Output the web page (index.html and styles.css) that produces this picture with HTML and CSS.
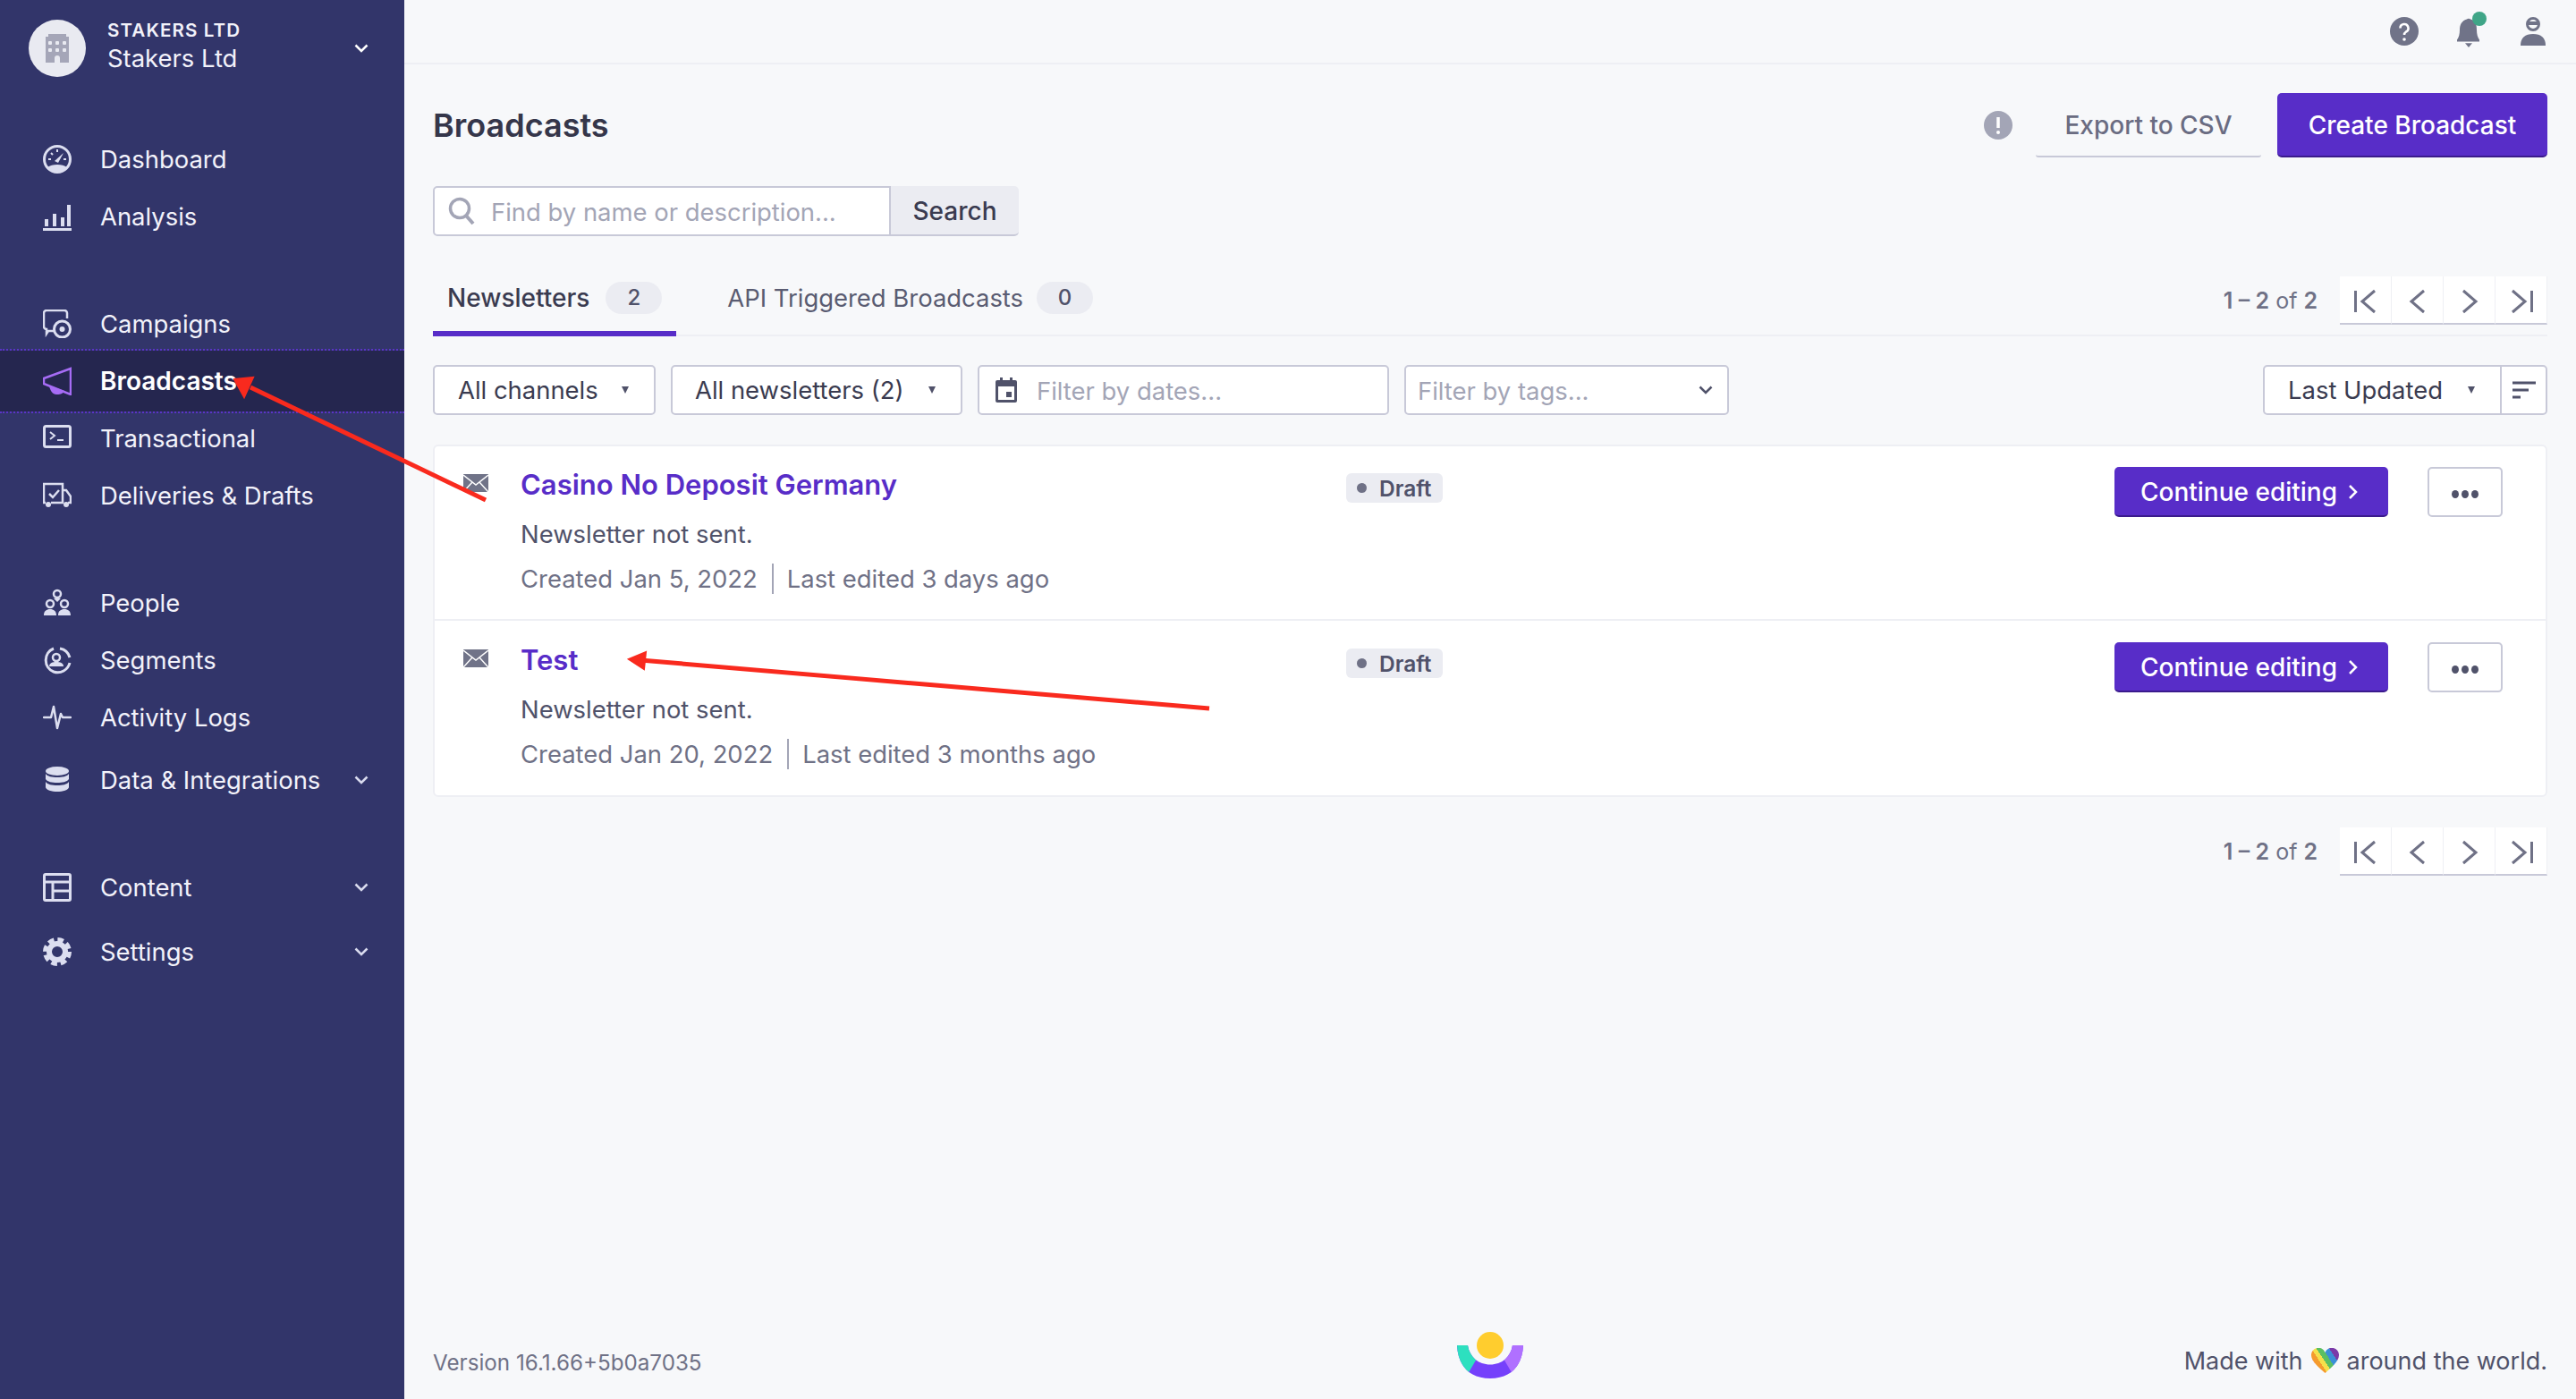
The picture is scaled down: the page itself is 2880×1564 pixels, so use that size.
FILE: index.html
```html
<!DOCTYPE html>
<html lang="en">
<head>
    <meta charset="UTF-8">
    <meta name="viewport" content="width=device-width, initial-scale=1.0">
    <title>Broadcasts</title>
    <link rel="stylesheet" href="styles.css">
</head>
<body>

<div class="app">
    <aside class="sidebar">
        <div class="org">
            <div class="org-avatar">
                <svg width="26" height="32" viewBox="0 0 26 32"><path d="M3 0h20v3h3v29H16v-5a3 3 0 0 0-6 0v5H0V3h3z" fill="#a5a6b8"/><g fill="#e9eaf1"><rect x="3" y="8" width="4" height="4" rx="1"/><rect x="11" y="8" width="4" height="4" rx="1"/><rect x="19" y="8" width="4" height="4" rx="1"/><rect x="3" y="16" width="4" height="4" rx="1"/><rect x="11" y="16" width="4" height="4" rx="1"/><rect x="19" y="16" width="4" height="4" rx="1"/></g></svg>
            </div>
            <div class="org-names">
                <div class="org-caps">STAKERS LTD</div>
                <div class="org-name">Stakers Ltd</div>
            </div>
            <svg class="chev org-chev" viewBox="0 0 16 10"><path d="M1.500 1.500 8 8l6.500-6.500"/></svg>
        </div>

        <nav class="nav">
            <div class="nav-group">
                <a class="nav-item">
                    <svg class="nav-icon" viewBox="0 0 32 32"><circle cx="16" cy="16" r="14.500" fill="none" stroke="currentColor" stroke-width="3"/><path d="M5 25a14 8 0 0 1 22 0 14 14 0 0 1-22 0z" fill="currentColor"/><path d="m13 18 10-9-6 11z" fill="currentColor"/><path d="M6 16h3M16 5v3M9 9l2 2M23 16h3" stroke="currentColor" stroke-width="2"/></svg>
                    Dashboard
                </a>
                <a class="nav-item">
                    <svg class="nav-icon" viewBox="0 0 32 32"><path d="M2 19h4v8H2zM11 13h4v14h-4zM20 17h4v10h-4zM27 3h4v24h-4z" fill="currentColor"/><path d="M0 30.500h32" stroke="currentColor" stroke-width="3"/></svg>
                    Analysis
                </a>
            </div>

            <div class="nav-group">
                <a class="nav-item">
                    <svg class="nav-icon" viewBox="0 0 32 32"><path d="M15 24H6l-2 3v-5a3 3 0 0 1-3-3V4a3 3 0 0 1 3-3h20a3 3 0 0 1 3 3v6" fill="none" stroke="currentColor" stroke-width="2.500"/><circle cx="21.500" cy="22" r="9" fill="#32356a" stroke="currentColor" stroke-width="3"/><circle cx="21.500" cy="22" r="3" fill="currentColor"/></svg>
                    Campaigns
                </a>
                <a class="nav-item nav-active">
                    <svg class="nav-icon" viewBox="0 0 32 32"><path d="M1 13 31 2v29L1 19z" fill="none" stroke="currentColor" stroke-width="2.500"/><path d="m7 21 17 6c-2 4-6 4-9 4-4 0-7-4-8-10z" fill="currentColor"/></svg>
                    Broadcasts
                </a>
                <a class="nav-item">
                    <svg class="nav-icon" viewBox="0 0 32 32"><rect x="1.500" y="2.500" width="29" height="23" rx="2" fill="none" stroke="currentColor" stroke-width="3"/><path d="m8 9 5 4-5 4" fill="none" stroke="currentColor" stroke-width="2"/><path d="M16 18h7" stroke="currentColor" stroke-width="2"/></svg>
                    Transactional
                </a>
                <a class="nav-item">
                    <svg class="nav-icon" viewBox="0 0 32 32"><path d="M3 24H1V3h21v21H9M22 10h4l5 7v7h-3M22 24h1" fill="none" stroke="currentColor" stroke-width="2.500"/><path d="m7 14 4 4 7-8" fill="none" stroke="currentColor" stroke-width="2.500"/><circle cx="6" cy="26" r="3" fill="currentColor"/><circle cx="26" cy="26" r="3" fill="currentColor"/></svg>
                    Deliveries &amp; Drafts
                </a>
            </div>

            <div class="nav-group">
                <a class="nav-item">
                    <svg class="nav-icon" viewBox="0 0 32 32"><g fill="none" stroke="currentColor" stroke-width="2.500"><circle cx="16" cy="6" r="4"/><circle cx="8" cy="17" r="4"/><circle cx="24" cy="17" r="4"/></g><path d="M12 11h8l-4 4zM1 30c0-5 3-7 7-7s7 2 7 7zM17 30c0-5 3-7 7-7s7 2 7 7z" fill="currentColor"/></svg>
                    People
                </a>
                <a class="nav-item">
                    <svg class="nav-icon" viewBox="0 0 32 32"><path d="M12 3a14 14 0 0 0 0 26 14 14 0 0 0 18-10M30 13a14 14 0 0 0-11-10" fill="none" stroke="currentColor" stroke-width="3"/><circle cx="15" cy="13" r="4" fill="none" stroke="currentColor" stroke-width="2.500"/><path d="M7 23c0-4 4-5 8-5s8 1 8 5z" fill="currentColor"/></svg>
                    Segments
                </a>
                <a class="nav-item">
                    <svg class="nav-icon" viewBox="0 0 32 32"><path d="M1 16h8l3-12 4 24 4-16 2 4h9" fill="none" stroke="currentColor" stroke-width="2.500" stroke-linecap="round" stroke-linejoin="round"/></svg>
                    Activity Logs
                </a>
                <a class="nav-item nav-tall nav-data">
                    <svg class="nav-icon" viewBox="0 0 32 32"><ellipse cx="16" cy="6" rx="13" ry="5" fill="currentColor"/><path d="M3 9c2 3 7 4 13 4s11-1 13-4v6c-2 3-7 4-13 4S5 18 3 15zM3 18c2 3 7 4 13 4s11-1 13-4v6c0 3-7 5-13 5S3 27 3 24z" fill="currentColor"/></svg>
                    Data &amp; Integrations
                    <svg class="chev" viewBox="0 0 16 10"><path d="M1.500 1.500 8 8l6.500-6.500"/></svg>
                </a>
            </div>

            <div class="nav-group nav-group-last">
                <a class="nav-item nav-tall">
                    <svg class="nav-icon" viewBox="0 0 32 32"><rect x="1.500" y="1.500" width="29" height="29" rx="1.500" fill="none" stroke="currentColor" stroke-width="3"/><path d="M1 10h30M11 10v20M11 20h20" stroke="currentColor" stroke-width="3"/></svg>
                    Content
                    <svg class="chev" viewBox="0 0 16 10"><path d="M1.500 1.500 8 8l6.500-6.500"/></svg>
                </a>
                <a class="nav-item nav-tall">
                    <svg class="nav-icon" viewBox="0 0 32 32"><circle cx="16" cy="16" r="9" fill="none" stroke="currentColor" stroke-width="6"/><circle cx="16" cy="16" r="13.500" fill="none" stroke="currentColor" stroke-width="5" stroke-dasharray="6.600 3.999"/></svg>
                    Settings
                    <svg class="chev" viewBox="0 0 16 10"><path d="M1.500 1.500 8 8l6.500-6.500"/></svg>
                </a>
            </div>
        </nav>
    </aside>

    <div class="main">
        <header class="topbar">
            <svg width="32" height="32" viewBox="0 0 32 32"><circle cx="16" cy="16" r="16" fill="#707388"/><path d="M11.500 12.500a4.500 4.500 0 1 1 6.500 4c-1.500 1-2 1.500-2 3.500" fill="none" stroke="#fff" stroke-width="2.600"/><circle cx="16" cy="25" r="1.800" fill="#fff"/></svg>
            <svg class="top-bell" width="36" height="44" viewBox="0 0 36 44"><g transform="translate(0 4) scale(1 .92)"><path d="M13 5a2.500 2.500 0 0 1 4 0c6 2 7 7 7 13 0 5 1 9 3 12v2H2v-2c2-3 3-7 3-12 0-6 2-11 8-13z" fill="#707388"/><path d="M11 34h8l-4 5z" fill="#707388"/></g><circle cx="27" cy="8" r="8" fill="#3fa587"/></svg>
            <svg width="28" height="32" viewBox="0 0 28 32"><circle cx="14" cy="8" r="6.500" fill="none" stroke="#707388" stroke-width="3"/><path d="M8 5h12l-1 4H9z" fill="#707388"/><path d="M0 32c0-9 5-13 14-13s14 4 14 13z" fill="#707388"/></svg>
        </header>

        <div class="content">
            <div class="page-head">
                <h1 class="page-title">Broadcasts</h1>
                <svg class="info-icon" width="32" height="32" viewBox="0 0 32 32"><circle cx="16" cy="16" r="16" fill="#a3a5b6"/><path d="M16 7v12" stroke="#fff" stroke-width="3.500"/><circle cx="16" cy="24" r="2" fill="#fff"/></svg>
                <button class="btn-export">Export to CSV</button>
                <button class="btn-primary btn-create">Create Broadcast</button>
            </div>

            <div class="search">
                <div class="search-input">
                    <svg width="32" height="32" viewBox="0 0 32 32"><circle cx="14" cy="13" r="10.500" fill="none" stroke="#a3a5b6" stroke-width="3.500"/><path d="m21 21 8 9" stroke="#a3a5b6" stroke-width="4"/></svg>
                    <span class="placeholder">Find by name or description...</span>
                </div>
                <div class="search-btn">Search</div>
            </div>

            <div class="tabs">
                <div class="tab tab-active">Newsletters <span class="count">2</span></div>
                <div class="tab">API Triggered Broadcasts <span class="count">0</span></div>
                <div class="tabs-pager pager">
                    <span class="pager-label"><b>1 – 2</b> of <b>2</b></span>
                    <div class="pager-btns">
                        <a class="pager-btn"><svg viewBox="0 0 28 30"><path d="M2.500 3v24M24 3 10 15l14 12"/></svg></a>
                        <a class="pager-btn"><svg viewBox="0 0 28 30"><path d="M21 3 7 15l14 12"/></svg></a>
                        <a class="pager-btn"><svg viewBox="0 0 28 30"><path d="m7 3 14 12L7 27"/></svg></a>
                        <a class="pager-btn"><svg viewBox="0 0 28 30"><path d="M25.500 3v24M4 3l14 12L4 27"/></svg></a>
                    </div>
                </div>
            </div>

            <div class="filters">
                <div class="select select-channels">All channels <i class="caret"></i></div>
                <div class="select select-newsletters">All newsletters (2) <i class="caret"></i></div>
                <div class="select select-dates">
                    <svg width="24" height="28" viewBox="0 0 24 28"><path d="M2 3h3V0h3v3h8V0h3v3h3a2 2 0 0 1 2 2v21a2 2 0 0 1-2 2H2a2 2 0 0 1-2-2V5a2 2 0 0 1 2-2z" fill="#50526a"/><path d="M3 10h18v15H3z" fill="#fff"/><path d="M12 16h6v6h-6z" fill="#50526a"/></svg>
                    <span class="placeholder">Filter by dates...</span>
                </div>
                <div class="select select-tags">
                    <span class="placeholder">Filter by tags...</span>
                    <svg class="chev chev-dark" viewBox="0 0 16 10"><path d="M1.500 1.500 8 8l6.500-6.500"/></svg>
                </div>
                <div class="sort">
                    <div class="sort-select">Last Updated <i class="caret"></i></div>
                    <div class="sort-dir">
                        <svg width="26" height="22" viewBox="0 0 26 22"><path d="M0 3h26M0 11h18M0 19h9" stroke="#50526a" stroke-width="3"/></svg>
                    </div>
                </div>
            </div>

            <div class="list">
                <div class="row">
                    <svg class="row-icon" width="28" height="20" viewBox="0 0 28 20"><path d="M0 0h28v20H0z" fill="#707388"/><path d="M0 1l14 11L28 1M0 20l10-11M28 20 18 9" fill="none" stroke="#fff" stroke-width="1.500"/></svg>
                    <div class="row-body">
                        <a class="row-title">Casino No Deposit Germany</a>
                        <div class="row-status">Newsletter not sent.</div>
                        <div class="row-meta"><span class="row-created">Created Jan 5, 2022</span><span>Last edited 3 days ago</span></div>
                    </div>
                    <div class="badge-col"><span class="badge"><i class="badge-dot"></i>Draft</span></div>
                    <button class="btn-primary btn-continue">Continue editing <svg width="12" height="18" viewBox="0 0 12 18"><path d="m2 2 7 7-7 7" fill="none" stroke="#fff" stroke-width="2.500"/></svg></button>
                    <button class="btn-more"><i></i><i></i><i></i></button>
                </div>
                <div class="row">
                    <svg class="row-icon" width="28" height="20" viewBox="0 0 28 20"><path d="M0 0h28v20H0z" fill="#707388"/><path d="M0 1l14 11L28 1M0 20l10-11M28 20 18 9" fill="none" stroke="#fff" stroke-width="1.500"/></svg>
                    <div class="row-body">
                        <a class="row-title">Test</a>
                        <div class="row-status">Newsletter not sent.</div>
                        <div class="row-meta"><span class="row-created">Created Jan 20, 2022</span><span>Last edited 3 months ago</span></div>
                    </div>
                    <div class="badge-col"><span class="badge"><i class="badge-dot"></i>Draft</span></div>
                    <button class="btn-primary btn-continue">Continue editing <svg width="12" height="18" viewBox="0 0 12 18"><path d="m2 2 7 7-7 7" fill="none" stroke="#fff" stroke-width="2.500"/></svg></button>
                    <button class="btn-more"><i></i><i></i><i></i></button>
                </div>
            </div>

            <div class="bottom-pager pager">
                <span class="pager-label"><b>1 – 2</b> of <b>2</b></span>
                <div class="pager-btns">
                    <a class="pager-btn"><svg viewBox="0 0 28 30"><path d="M2.500 3v24M24 3 10 15l14 12"/></svg></a>
                    <a class="pager-btn"><svg viewBox="0 0 28 30"><path d="M21 3 7 15l14 12"/></svg></a>
                    <a class="pager-btn"><svg viewBox="0 0 28 30"><path d="m7 3 14 12L7 27"/></svg></a>
                    <a class="pager-btn"><svg viewBox="0 0 28 30"><path d="M25.500 3v24M4 3l14 12L4 27"/></svg></a>
                </div>
            </div>

            <footer class="footer">
                <span class="version">Version 16.1.66+5b0a7035</span>
                <svg class="logo" width="74" height="52" viewBox="0 0 74 52">
                    <defs>
                        <clipPath id="smile"><path d="M0 15C1 38 14 52 37 52S73 38 74 15H62C60 28 50 36.500 37 36.500S14 28 12 15z"/></clipPath>
                    </defs>
                    <circle cx="37" cy="15" r="15" fill="#ffcd2e"/>
                    <g clip-path="url(#smile)">
                        <rect width="74" height="52" fill="#7540fb"/>
                        <path d="M0 0h22v30L12 47H0z" fill="#2de0bf"/>
                        <path d="M74 0H52v30l10 17h12z" fill="#b070ff"/>
                    </g>
                </svg>
                <span class="made">Made with
                    <svg class="heart" width="31" height="28" viewBox="0 0 31 28">
                        <defs>
                            <linearGradient id="rainbow" x1="0" y1="0.800" x2="1" y2="0.200" gradientUnits="objectBoundingBox">
                                <stop offset="0" stop-color="#e23c3c"/><stop offset=".18" stop-color="#e23c3c"/>
                                <stop offset=".18" stop-color="#f59b2e"/><stop offset=".34" stop-color="#f59b2e"/>
                                <stop offset=".34" stop-color="#f6e04a"/><stop offset=".48" stop-color="#f6e04a"/>
                                <stop offset=".48" stop-color="#5bbf62"/><stop offset=".64" stop-color="#5bbf62"/>
                                <stop offset=".64" stop-color="#3b8fd6"/><stop offset=".82" stop-color="#3b8fd6"/>
                                <stop offset=".82" stop-color="#7a3aa8"/><stop offset="1" stop-color="#7a3aa8"/>
                            </linearGradient>
                        </defs>
                        <path d="M15.500 28C8 21 0 15 0 8a8 8 0 0 1 15.500-3A8 8 0 0 1 31 8c0 7-8 13-15.500 20z" fill="url(#rainbow)"/>
                    </svg>
                    around the world.</span>
            </footer>
        </div>
    </div>
</div>

<!-- red annotation arrows drawn over the screenshot -->
<svg class="arrows" width="2880" height="1564" viewBox="0 0 2880 1564">
    <path d="M543 559 280 433" stroke="#f92a1e" stroke-width="5" fill="none"/>
    <path d="m262 424 21-2-10 22z" fill="#f92a1e" stroke="#f92a1e" stroke-width="2"/>
    <path d="M1352 792 716 738" stroke="#f92a1e" stroke-width="5" fill="none"/>
    <path d="m703 737 19-8-2 19z" fill="#f92a1e" stroke="#f92a1e" stroke-width="2"/>
</svg>

</body>
</html>
```

FILE: styles.css
```css
* {
    box-sizing: border-box;
}

body {
    margin: 0;
    height: 100vh;
    overflow: hidden;
    background: #f7f8fa;
    color: #3a3b50;
    font-family: 'Inter', 'Liberation Sans', sans-serif;
    font-size: 27.43px;
}

button {
    font-family: inherit;
    cursor: pointer;
}

.app {
    display: flex;
    height: 100vh;
}

/* sidebar */
.sidebar {
    flex: 0 0 452px;
    background: #32356a;
    color: #f2f2fa;
}

.org {
    display: flex;
    align-items: center;
    height: 108px;
    padding: 0 40px 0 32px;
}

.org-avatar {
    display: flex;
    align-items: center;
    justify-content: center;
    flex: 0 0 64px;
    height: 64px;
    border-radius: 50%;
    background: #e9eaf1;
}

.org-names {
    flex: 1;
    margin-left: 24px;
    padding-bottom: 8px;
}

.org-caps {
    font-size: 20.57px;
    font-weight: 600;
    line-height: 30px;
    letter-spacing: 1.1px;
}

.org-name {
    font-size: 27.43px;
    line-height: 32px;
}

.chev {
    flex: 0 0 16px;
    width: 16px;
    height: 10px;
    fill: none;
    stroke: #d9dbee;
    stroke-width: 2.5;
}

.org-chev {
    stroke: #fff;
}

.chev-dark {
    stroke: #50526a;
}

.nav {
    padding-top: 38px;
}

.nav-group + .nav-group {
    margin-top: 56px;
}

.nav-group + .nav-group-last {
    margin-top: 48px;
}

.nav-item {
    display: flex;
    align-items: center;
    height: 64px;
    padding: 0 40px 0 48px;
    color: #f2f2fa;
}

.nav-tall {
    height: 72px;
}

.nav-data {
    margin-top: 2px;
}

.nav-icon {
    flex: 0 0 32px;
    width: 32px;
    height: 32px;
    margin-right: 32px;
    color: #dcdef0;
}

.nav-item .chev {
    margin-left: auto;
}

/* the active band sticks out over its neighbours, dotted rules outside it */
.nav-active {
    position: relative;
    height: 72px;
    margin: -4px 0;
    background: #25264f;
    background-clip: padding-box;
    color: #fff;
    font-size: 28px;
    font-weight: 600;
    border-top: 2px dotted #5a34c6;
    border-bottom: 2px dotted #5a34c6;
}

.nav-active .nav-icon {
    color: #a66cf5;
}

/* main column */
.main {
    display: flex;
    flex-direction: column;
    flex: 1;
    min-width: 0;
}

.topbar {
    display: flex;
    align-items: center;
    justify-content: flex-end;
    gap: 37px;
    flex: 0 0 72px;
    padding: 0 34px 0 0;
    border-bottom: 2px solid #eeeff4;
}

.top-bell {
    margin-left: 4px;
}

.content {
    display: flex;
    flex-direction: column;
    flex: 1;
    padding: 32px 32px 0;
}

.page-head {
    display: flex;
    align-items: center;
    height: 72px;
}

.page-title {
    flex: 1;
    margin: 0;
    font-size: 36px;
    font-weight: 600;
    color: #35364a;
}

.info-icon {
    margin-right: 26px;
}

.btn-export {
    width: 252px;
    height: 72px;
    margin-right: 18px;
    padding: 2px 0 0;
    border: 0;
    border-bottom: 2px solid #c8c9d8;
    border-radius: 3px;
    background: transparent;
    color: #6a6c82;
    font-size: 28px;
    font-weight: 500;
}

.btn-primary {
    padding: 2px 0 0;
    border: 0;
    border-bottom: 2px solid #3a1a8c;
    border-radius: 5px;
    background: #582dc8;
    color: #fff;
    font-size: 28px;
    font-weight: 500;
}

.btn-create {
    width: 302px;
    height: 72px;
}

.search {
    display: flex;
    width: 655px;
    height: 56px;
    margin-top: 32px;
}

.search-input {
    display: flex;
    align-items: center;
    gap: 17px;
    width: 512px;
    padding-left: 14px;
    border: 2px solid #c8c9d8;
    border-radius: 5px 0 0 5px;
    background: #fff;
}

.placeholder {
    color: #a3a5b6;
    padding-top: 2px;
}

.search-btn {
    display: flex;
    flex: 1;
    align-items: center;
    justify-content: center;
    padding-top: 1px;
    border-bottom: 2px solid #c8c9d8;
    border-radius: 0 5px 5px 0;
    background: #ebecf2;
    color: #3a3b50;
    font-size: 28px;
    font-weight: 500;
}

/* tabs */
.tabs {
    display: flex;
    height: 80px;
    margin-top: 32px;
    border-bottom: 2px solid #eeeff4;
}

.tab {
    display: flex;
    align-items: center;
    height: 80px;
    margin-right: 41px;
    padding: 0 16px;
    border-bottom: 6px solid transparent;
    color: #5a5c72;
}

.tab-active {
    border-bottom-color: #582dc8;
    color: #3a3b50;
    font-size: 28px;
    font-weight: 500;
}

.count {
    display: inline-block;
    width: 63px;
    height: 36px;
    margin-left: 15px;
    border-radius: 18px;
    background: #ebecf2;
    color: #50526a;
    font-size: 24px;
    font-weight: 500;
    line-height: 36px;
    text-align: center;
}

.tab-active .count {
    margin-left: 18px;
}

.pager {
    display: flex;
    align-items: center;
    justify-content: flex-end;
}

.tabs-pager {
    flex: 1;
    height: 54px;
    margin-top: 13px;
}

.pager-label {
    margin-right: 25px;
    color: #6f7186;
    font-size: 25px;
}

.pager-label b {
    font-weight: 600;
}

.pager-btns {
    display: flex;
    width: 232px;
    height: 54px;
}

.pager-btn {
    display: flex;
    align-items: center;
    justify-content: center;
    flex: 1;
    padding-top: 3px;
    border-right: 1px solid #eeeff4;
    border-bottom: 2px solid #c8c9d8;
    background: #fff;
}

.pager-btn svg {
    width: 28px;
    height: 30px;
    fill: none;
    stroke: #6f7186;
    stroke-width: 3;
}

/* filters */
.filters {
    display: flex;
    gap: 17px;
    height: 56px;
    margin-top: 32px;
}

.select {
    display: flex;
    align-items: center;
    height: 56px;
    border: 2px solid #c8c9d8;
    border-radius: 5px;
    background: #fff;
}

.select-channels {
    width: 249px;
    padding-left: 26px;
}

.select-newsletters {
    width: 326px;
    padding-left: 25px;
}

.select-dates {
    gap: 22px;
    width: 460px;
    padding-left: 18px;
}

.select-tags {
    justify-content: space-between;
    width: 363px;
    padding: 0 16px 0 13px;
}

.caret {
    flex: 0 0 8px;
    width: 0;
    height: 0;
    margin-left: auto;
    margin-right: 28px;
    border-top: 8px solid #50526a;
    border-left: 4px solid transparent;
    border-right: 4px solid transparent;
}

.sort {
    display: flex;
    width: 318px;
    margin-left: auto;
    border: 2px solid #c8c9d8;
    border-radius: 5px;
    background: #fff;
}

.sort-select {
    display: flex;
    align-items: center;
    flex: 1;
    padding-left: 26px;
    border-right: 2px solid #c8c9d8;
}

.sort-dir {
    display: flex;
    align-items: center;
    justify-content: center;
    flex: 0 0 49px;
}

/* list */
.list {
    margin-top: 33px;
    border: 2px solid #eeeff4;
    border-radius: 6px;
    background: #fff;
}

.row {
    display: flex;
    align-items: flex-start;
    padding: 23px 48px 25px 32px;
}

.row + .row {
    padding-top: 24px;
    padding-bottom: 26px;
    border-top: 2px solid #eeeff4;
}

.row-icon {
    flex: 0 0 28px;
    margin-top: 8px;
    margin-right: 36px;
}

.row-body {
    flex: 0 0 923px;
}

.row-title {
    display: block;
    color: #582dc8;
    font-size: 31px;
    font-weight: 600;
    line-height: 40px;
}

.row-status {
    margin-top: 15px;
    line-height: 40px;
    color: #50526a;
}

.row-meta {
    display: flex;
    margin-top: 10px;
    color: #6f7186;
    line-height: 40px;
}

.row-created {
    height: 34px;
    margin-top: 3px;
    margin-right: 15px;
    padding-right: 16px;
    border-right: 2px solid #a3a5b6;
    line-height: 34px;
}

.badge-col {
    display: flex;
    flex: 1;
    padding-top: 7px;
}

.badge {
    display: flex;
    align-items: center;
    height: 33px;
    padding: 0 12px;
    border-radius: 6px;
    background: #ebecf2;
    color: #50526a;
    font-size: 24.5px;
    font-weight: 600;
}

.badge-dot {
    width: 11px;
    height: 11px;
    margin-right: 14px;
    border-radius: 50%;
    background: #6f7186;
}

.btn-continue {
    display: flex;
    align-items: center;
    justify-content: center;
    gap: 12px;
    width: 306px;
    height: 56px;
    padding-right: 4px;
}

.btn-more {
    display: flex;
    align-items: center;
    justify-content: center;
    gap: 3px;
    width: 84px;
    height: 56px;
    margin-left: 44px;
    padding: 4px 0 0;
    border: 2px solid #c8c9d8;
    border-radius: 5px;
    background: #fff;
}

.btn-more i {
    width: 8px;
    height: 9px;
    border-radius: 50%;
    background: #50526a;
}

.bottom-pager {
    margin-top: 34px;
}

/* footer */
.footer {
    display: flex;
    align-items: center;
    justify-content: space-between;
    height: 52px;
    margin-top: auto;
    margin-bottom: 23px;
    color: #50526a;
}

.version {
    flex: 0 0 1145px;
    margin-top: 16px;
    color: #6f7186;
    font-size: 24.2px;
}

.logo {
    flex: 0 0 74px;
}

.made {
    display: flex;
    align-items: center;
    gap: 9px;
    margin-left: auto;
    margin-top: 12px;
    font-size: 27px;
}

.arrows {
    position: absolute;
    top: 0;
    left: 0;
    pointer-events: none;
}
```
